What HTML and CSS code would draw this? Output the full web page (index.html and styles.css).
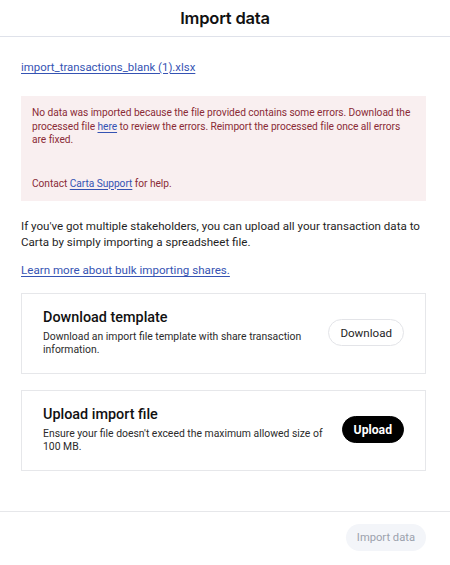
FILE: index.html
```html
<!DOCTYPE html>
<html lang="en">
<head>
<meta charset="utf-8">
<title>Import data</title>
<link rel="stylesheet" href="styles.css">
</head>
<body>
<div class="modal">
  <header class="modal-header">
    <h1 class="modal-title">Import data</h1>
  </header>
  <main class="modal-body">
    <a class="link file-link" href="#">import_transactions_blank (1).xlsx</a>
    <div class="alert">
      <p class="alert-text">No data was imported because the file provided contains some errors. Download the processed file <a class="link" href="#">here</a> to review the errors. Reimport the processed file once all errors are fixed.</p>
      <p class="alert-text alert-contact">Contact <a class="link" href="#">Carta Support</a> for help.</p>
    </div>
    <p class="intro">If you've got multiple stakeholders, you can upload all your transaction data to Carta by simply importing a spreadsheet file.</p>
    <a class="link learn-link" href="#">Learn more about bulk importing shares.</a>
    <section class="card">
      <div class="card-text">
        <h2 class="card-title">Download template</h2>
        <p class="card-desc">Download an import file template with share transaction information.</p>
      </div>
      <button class="btn btn-outline">Download</button>
    </section>
    <section class="card">
      <div class="card-text">
        <h2 class="card-title">Upload import file</h2>
        <p class="card-desc">Ensure your file doesn't exceed the maximum allowed size of 100 MB.</p>
      </div>
      <button class="btn btn-dark">Upload</button>
    </section>
  </main>
  <footer class="modal-footer">
    <button class="btn btn-disabled">Import data</button>
  </footer>
</div>
</body>
</html>
```
FILE: styles.css
```css
* { box-sizing: border-box; }
html, body { margin: 0; padding: 0; background: #fff; }
body {
  font-family: Roboto, "Noto Sans", sans-serif;
  color: #1f1f1f;
  width: 450px;
  height: 565px;
  overflow: hidden;
}
.modal { display: flex; flex-direction: column; height: 565px; }
.modal-header {
  height: 37px;
  border-bottom: 1px solid #dfe2ea;
  display: flex;
  align-items: center;
  justify-content: center;
}
.modal-title {
  margin: 0;
  font-family: Inter, Roboto, sans-serif;
  font-size: 16.5px;
  font-weight: 600;
  color: #111;
  letter-spacing: -0.2px;
}
.modal-body {
  flex: 1;
  padding: 22px 24px 0 21px;
  display: flex;
  flex-direction: column;
  align-items: flex-start;
}
.link {
  color: #3553b3;
  text-decoration: underline;
  text-decoration-thickness: 1px;
  text-underline-offset: 2px;
}
.file-link { font-size: 11.4px; line-height: 16px; }
.alert {
  margin-top: 21px;
  align-self: stretch;
  background: #f9eff0;
  padding: 10px 10px 11px 11px;
}
.alert-text {
  margin: 0;
  font-size: 10.2px;
  letter-spacing: -0.05px;
  line-height: 13.5px;
  color: #8a2b36;
}
.alert-contact { margin-top: 30px; }
.intro {
  margin: 17px 0 0;
  font-size: 11.6px;
  line-height: 16px;
  color: #1f1f1f;
}
.learn-link { margin-top: 12px; font-size: 11.6px; line-height: 16px; }
.card {
  align-self: stretch;
  border: 1px solid #e6e7ea;
  padding: 15px 21px 17px 21px;
  display: flex;
  align-items: center;
  gap: 12px;
}
.learn-link + .card { margin-top: 15px; }
.card + .card { margin-top: 16px; }
.card-text { flex: 1; }
.card-title {
  margin: 0;
  font-size: 14.4px;
  line-height: 18px;
  font-weight: 500;
  color: #111;
}
.card-desc {
  margin: 3px 0 0;
  font-size: 10.4px;
  line-height: 13px;
  color: #2b2b2b;
}
.btn {
  font-family: Roboto, "Noto Sans", sans-serif;
  font-size: 11.6px;
  height: 27px;
  border-radius: 14px;
  padding: 0 11px;
  cursor: pointer;
  white-space: nowrap;
}
.btn-outline {
  background: #fff;
  border: 1px solid #e3e4e8;
  color: #1f1f1f;
}
.btn-dark {
  background: #000;
  border: 1px solid #000;
  color: #fff;
  font-weight: 700;
  font-size: 12.2px;
}
.modal-footer {
  border-top: 1px solid #e6e7ea;
  height: 54px;
  display: flex;
  align-items: center;
  justify-content: flex-end;
  padding: 0 24px 2px 0;
}
.btn-disabled {
  background: #f3f5f9;
  border: none;
  color: #9ca2ad;
  font-size: 11.2px;
  padding: 0 11px;
}
```
